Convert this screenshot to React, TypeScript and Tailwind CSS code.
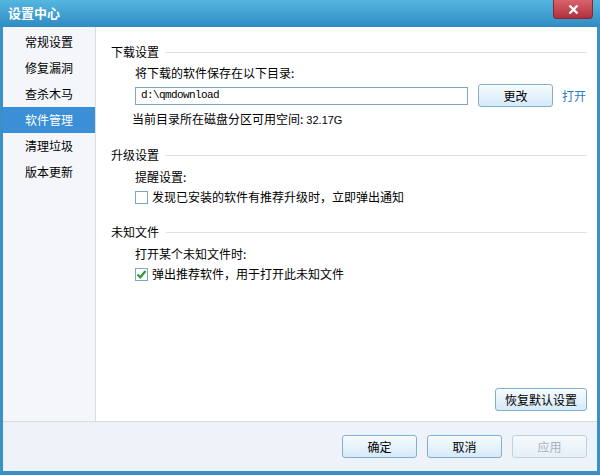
import { useState } from "react";

const menu = ["常规设置", "修复漏洞", "查杀木马", "软件管理", "清理垃圾", "版本更新"];

const btn =
  "h-[23px] shrink-0 rounded-[3px] border border-[#7fb0d2] bg-gradient-to-b from-[#f7fbfe] to-[#d6eaf8] text-[12px] text-black shadow-[inset_0_1px_0_#ffffff]";

function Section({ title }: { title: string }) {
  return (
    <div className="flex items-center h-4">
      <span className="text-[12px] leading-4">{title}</span>
      <div className="flex-1 h-px bg-[#dfe3e8] ml-[7px]" />
    </div>
  );
}

function Check({ checked, onChange, label }: { checked: boolean; onChange: () => void; label: string }) {
  return (
    <label className="flex items-center h-4 cursor-default" onClick={onChange}>
      <span className="w-[13px] h-[13px] border border-[#7ba7c8] bg-white flex items-center justify-center">
        {checked && (
          <svg width="11" height="11" viewBox="0 0 11 11">
            <path d="M1.5 5.5 L4.3 8.3 L9.5 2" fill="none" stroke="#2f9a2f" strokeWidth="2.2" />
          </svg>
        )}
      </span>
      <span className="ml-[4px] text-[12px] leading-4">{label}</span>
    </label>
  );
}

export default function App() {
  const [active, setActive] = useState(3);
  const [notify, setNotify] = useState(false);
  const [recommend, setRecommend] = useState(true);

  return (
    <div
      className="w-[600px] h-[475px] flex flex-col bg-[#3a91c6] overflow-hidden"
      style={{ fontFamily: '"Noto Sans CJK SC", "Noto Sans", sans-serif' }}
    >
      {/* title bar */}
      <div className="h-[27px] flex items-start justify-between bg-gradient-to-b from-[#55b6e0] to-[#2f8cc4]">
        <span className="ml-[8px] mt-[5px] text-[13px] leading-4 font-bold text-white">设置中心</span>
        <button className="mr-[7px] w-[40px] h-[19px] rounded-b-[4px] border border-t-0 border-[#8e2430] bg-gradient-to-b from-[#d8626b] to-[#b0303c] flex items-center justify-center">
          <svg width="11" height="11" viewBox="0 0 11 11">
            <path d="M1.5 1.5 L9.5 9.5 M9.5 1.5 L1.5 9.5" stroke="#fff" strokeWidth="2.4" />
          </svg>
        </button>
      </div>

      <div className="flex-1 flex flex-col mx-[3px] mb-[4px] bg-white">
        <div className="flex-1 flex">
          {/* left menu */}
          <div className="w-[93px] bg-[#f4f6fa] border-r border-[#d9dee5] pt-[2px]">
            {menu.map((m, i) => (
              <div
                key={m}
                onClick={() => setActive(i)}
                className={
                  "h-[26px] pl-[22px] flex items-center text-[12px] " +
                  (i === active ? "bg-[#3a8fd6] text-white" : "text-black")
                }
              >
                {m}
              </div>
            ))}
          </div>

          {/* settings */}
          <div className="flex-1 flex flex-col pt-[17px] pl-[15px] pr-[10px] pb-[10px]">
            <Section title="下载设置" />
            <div className="pl-[24px]">
              <div className="mt-[5px] text-[12px] leading-4">将下载的软件保存在以下目录:</div>
              <div className="mt-[3px] flex items-center h-[23px] whitespace-nowrap">
                <div
                  className="w-[333px] shrink-0 h-[18px] border border-[#7ba7c8] flex items-center px-[5px] text-[11px] tracking-[-0.6px] text-black"
                  style={{ fontFamily: '"Liberation Mono", monospace' }}
                >
                  d:\qmdownload
                </div>
                <button className={btn + " w-[75px] ml-[10px]"}>更改</button>
                <span className="ml-[9px] shrink-0 text-[12px] text-[#2a7dc2]">打开</span>
              </div>
              <div className="mt-[4px] -ml-[3px] text-[12px] leading-4">
                当前目录所在磁盘分区可用空间:
                <span className="ml-[3px] text-[11px]" style={{ fontFamily: '"Liberation Sans", sans-serif' }}>
                  32.17G
                </span>
              </div>
            </div>

            <div className="mt-[19px]">
              <Section title="升级设置" />
            </div>
            <div className="pl-[24px]">
              <div className="mt-[6px] text-[12px] leading-4">提醒设置:</div>
              <div className="mt-[4px]">
                <Check checked={notify} onChange={() => setNotify(!notify)} label="发现已安装的软件有推荐升级时，立即弹出通知" />
              </div>
            </div>

            <div className="mt-[19px]">
              <Section title="未知文件" />
            </div>
            <div className="pl-[24px]">
              <div className="mt-[6px] text-[12px] leading-4">打开某个未知文件时:</div>
              <div className="mt-[4px]">
                <Check checked={recommend} onChange={() => setRecommend(!recommend)} label="弹出推荐软件，用于打开此未知文件" />
              </div>
            </div>

            <div className="flex-1" />
            <div className="flex justify-end">
              <button className={btn + " w-[92px]"}>恢复默认设置</button>
            </div>
          </div>
        </div>

        {/* footer */}
        <div className="h-[50px] bg-[#eef3fa] border-t border-[#d5dce4] flex items-center justify-end pr-[10px] gap-[10px]">
          <button className={btn + " w-[75px]"}>确定</button>
          <button className={btn + " w-[75px]"}>取消</button>
          <button
            className="w-[75px] h-[23px] rounded-[3px] border border-[#bcd3e4] bg-gradient-to-b from-[#f6f9fc] to-[#e6eff7] text-[12px] text-[#a9b3bc]"
            disabled
          >
            应用
          </button>
        </div>
      </div>
    </div>
  );
}
